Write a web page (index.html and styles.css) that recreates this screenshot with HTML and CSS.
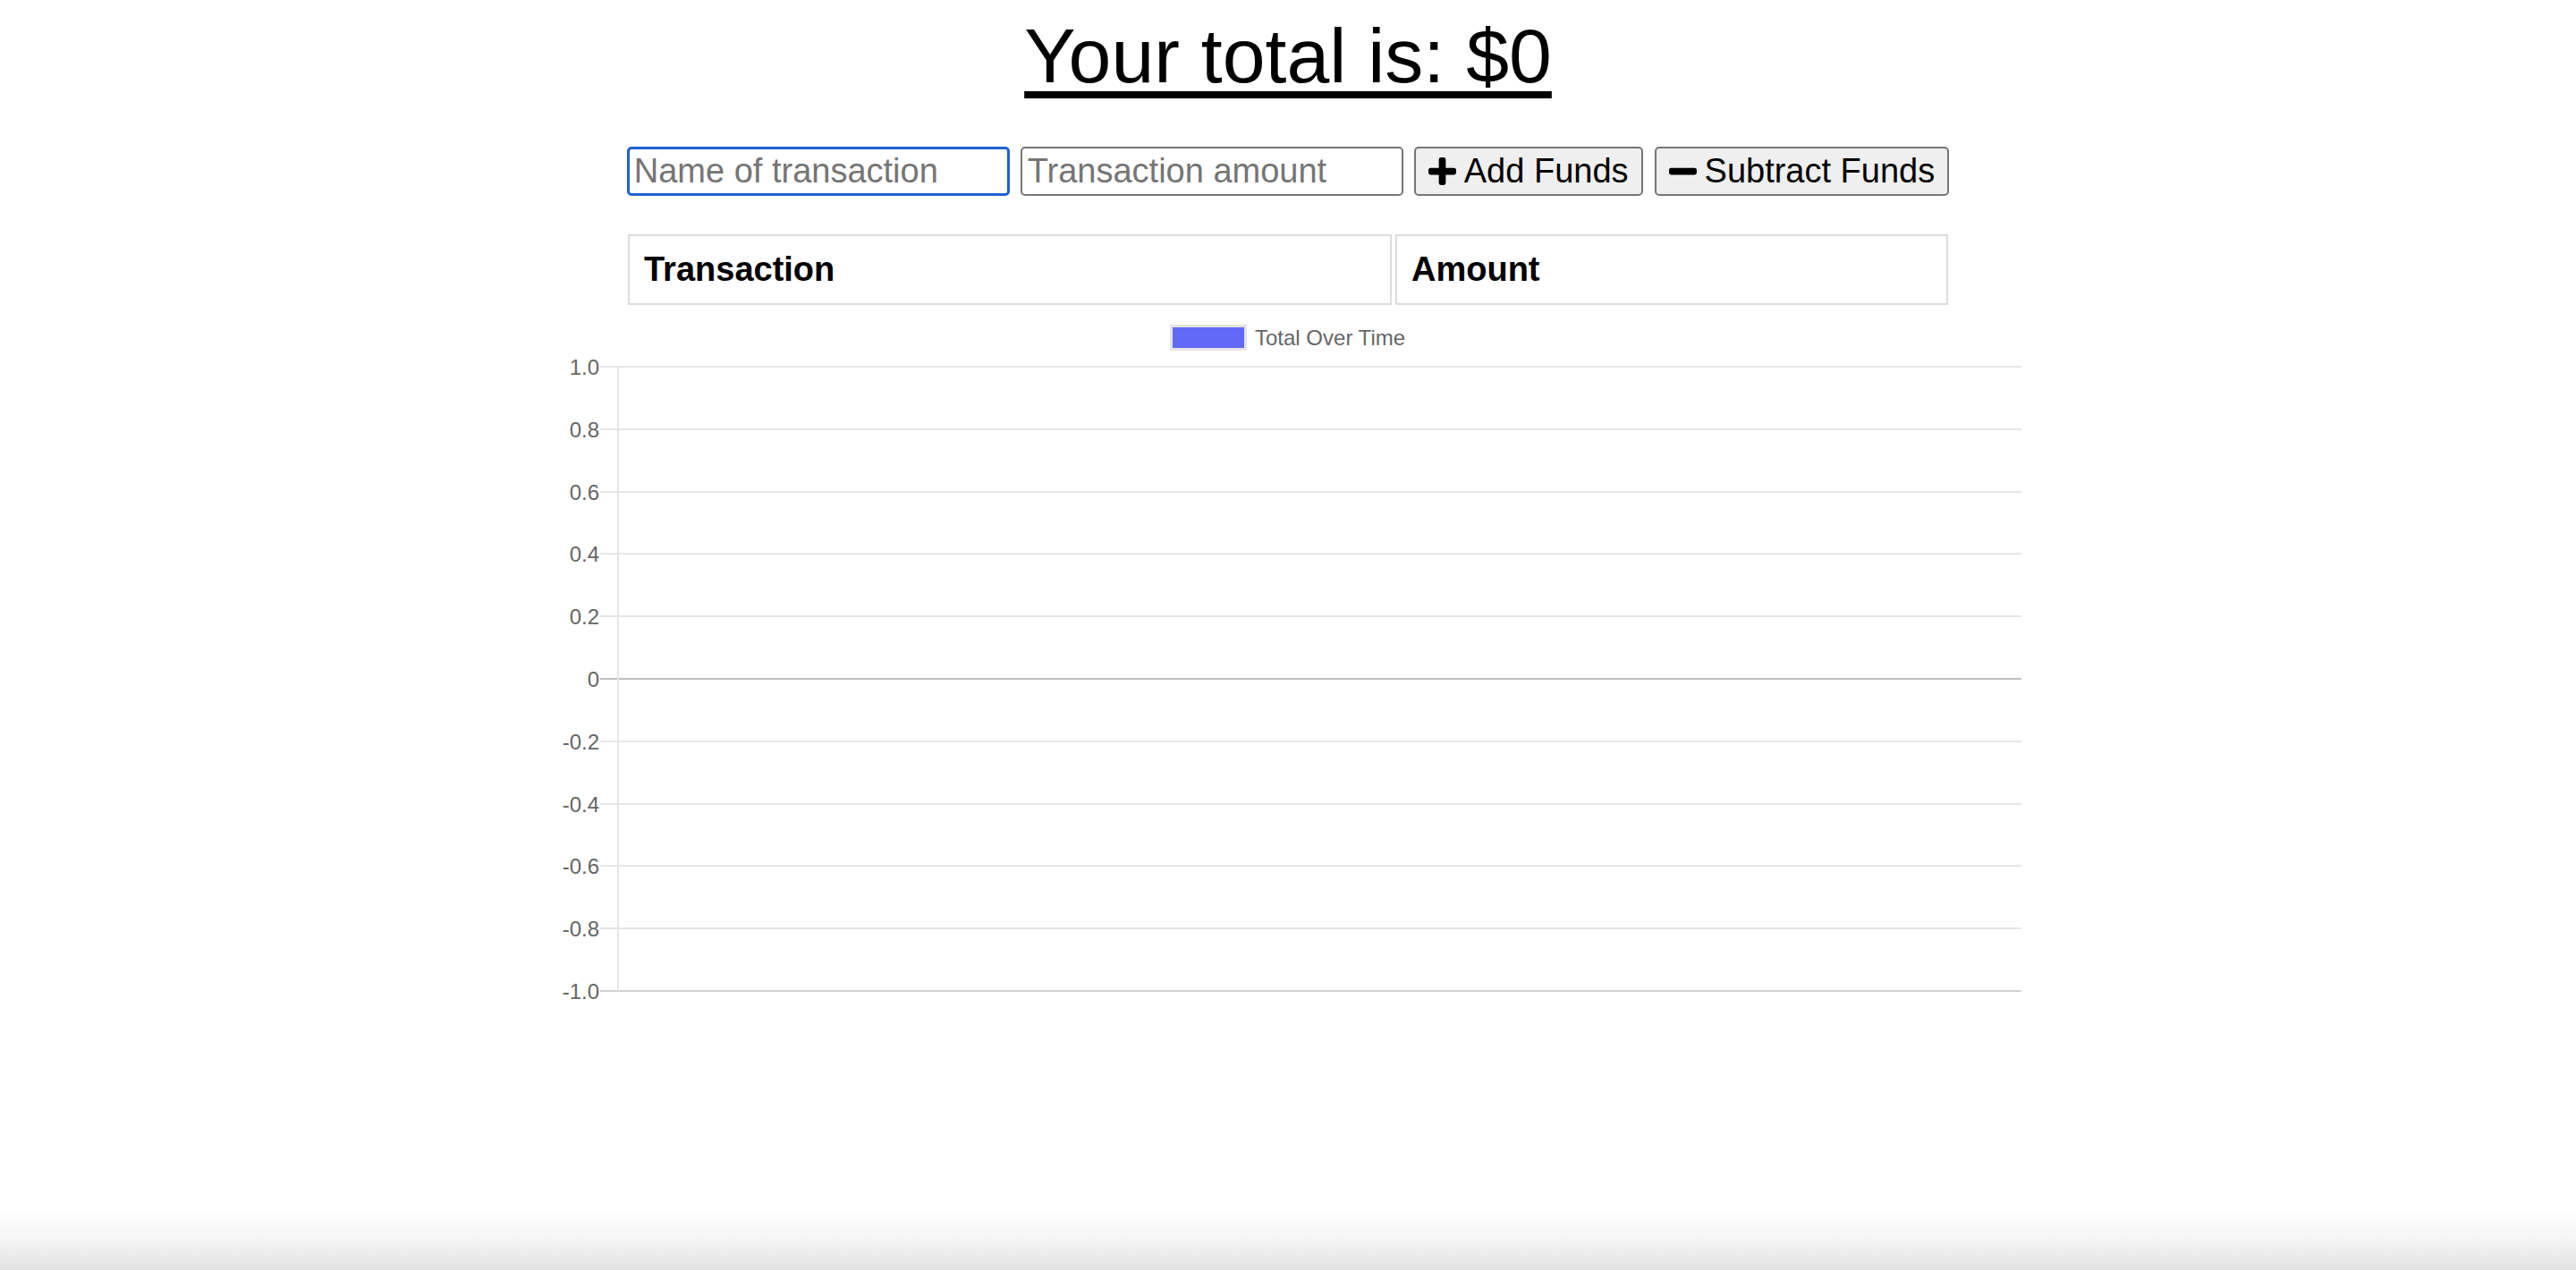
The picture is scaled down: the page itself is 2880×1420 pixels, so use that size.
FILE: index.html
```html
<!DOCTYPE html>
<html>
<head>
  <title>Budget Tracker</title>
  <link rel="stylesheet" href="styles.css">
</head>
<body>
  <h1 class="total">Your total is: $<span id="total">0</span></h1>

  <div class="form">
    <input type="text" id="t-name" class="field field-focus" placeholder="Name of transaction">
    <input type="number" id="t-amount" class="field" placeholder="Transaction amount">
    <button id="add-btn" class="btn">
      <svg class="icon" viewBox="0 0 32 32"><rect x="12" y="0" width="8" height="32" rx="2.5"/><rect x="0" y="12" width="32" height="8" rx="2.5"/></svg>
      Add Funds
    </button>
    <button id="sub-btn" class="btn">
      <svg class="icon" viewBox="0 0 32 32"><rect x="0" y="12" width="32" height="8" rx="2.5"/></svg>
      Subtract Funds
    </button>
  </div>

  <div class="wrapper">
    <table class="transactions">
      <thead>
        <tr>
          <th class="col-name">Transaction</th>
          <th class="col-amount">Amount</th>
        </tr>
      </thead>
      <tbody id="tbody"></tbody>
    </table>
  </div>

  <div class="chart-box">
    <svg id="myChart" class="chart" width="1640" height="800" viewBox="0 0 1640 800">
      <!-- legend -->
      <rect class="legend-box" x="689.5" y="21.5" width="83" height="26"/>
      <text class="legend-label" x="783" y="43">Total Over Time</text>

      <!-- grid -->
      <line class="grid" x1="51" y1="67" x2="1640" y2="67"/>
      <line class="grid" x1="51" y1="137" x2="1640" y2="137"/>
      <line class="grid" x1="51" y1="207" x2="1640" y2="207"/>
      <line class="grid" x1="51" y1="276" x2="1640" y2="276"/>
      <line class="grid" x1="51" y1="346" x2="1640" y2="346"/>
      <line class="grid zero" x1="51" y1="416" x2="1640" y2="416"/>
      <line class="grid" x1="51" y1="486" x2="1640" y2="486"/>
      <line class="grid" x1="51" y1="556" x2="1640" y2="556"/>
      <line class="grid" x1="51" y1="625" x2="1640" y2="625"/>
      <line class="grid" x1="51" y1="695" x2="1640" y2="695"/>
      <line class="grid base" x1="51" y1="765" x2="1640" y2="765"/>
      <line class="grid" x1="71" y1="67" x2="71" y2="765"/>

      <!-- y axis labels -->
      <text class="tick" x="50" y="67">1.0</text>
      <text class="tick" x="50" y="137">0.8</text>
      <text class="tick" x="50" y="207">0.6</text>
      <text class="tick" x="50" y="276">0.4</text>
      <text class="tick" x="50" y="346">0.2</text>
      <text class="tick" x="50" y="416">0</text>
      <text class="tick" x="50" y="486">-0.2</text>
      <text class="tick" x="50" y="556">-0.4</text>
      <text class="tick" x="50" y="625">-0.6</text>
      <text class="tick" x="50" y="695">-0.8</text>
      <text class="tick" x="50" y="765">-1.0</text>
    </svg>
  </div>
</body>
</html>
```

FILE: styles.css
```css
html {
  min-height: 100%;
  background: linear-gradient(to bottom, #fff 1350px, #f5f5f5 1385px, #e2e2e2 1420px);
}

body {
  margin: 0;
  font-family: "Liberation Sans", Arial, sans-serif;
  color: #000;
}

.total {
  margin: 13px 0 0;
  font-size: 86px;
  font-weight: normal;
  text-align: center;
  text-decoration: underline;
  text-decoration-thickness: 8px;
  text-underline-offset: 10px;
  text-decoration-skip-ink: auto;
}

.form {
  display: flex;
  justify-content: center;
  gap: 12px;
  margin-top: 52px;
}

.field {
  box-sizing: border-box;
  width: 428px;
  height: 55px;
  padding: 0 6px;
  font-family: inherit;
  font-size: 38px;
  border: 2px solid #767676;
  border-radius: 5px;
  outline: none;
}

.field::placeholder {
  color: #757575;
}

.field-focus {
  border: 3px solid #1f62cf;
  padding: 0 5px;
}

.btn {
  display: flex;
  align-items: center;
  gap: 9px;
  box-sizing: border-box;
  height: 55px;
  padding: 0 14px;
  font-family: inherit;
  font-size: 38px;
  color: #000;
  background-color: #efefef;
  border: 2px solid #767676;
  border-radius: 5px;
}

.btn .icon {
  width: 31px;
  height: 31px;
  fill: #000;
}

#sub-btn {
  margin-left: 1px;
}

.wrapper {
  margin-top: 43px;
}

.transactions {
  margin: 0 auto;
  border-spacing: 4px 0;
}

.transactions th {
  padding: 16px;
  font-size: 38px;
  line-height: 43px;
  text-align: left;
  border: 2px solid #dddddd;
}

.col-name {
  width: 818px;
}

.col-amount {
  width: 582px;
}

.chart-box {
  width: 1640px;
  margin: 2px auto 0;
}

.chart {
  display: block;
}

.legend-box {
  fill: #6369f6;
  stroke: #e4e4e4;
  stroke-width: 3;
}

.legend-label,
.tick {
  font-family: "Liberation Sans", Arial, sans-serif;
  font-size: 24px;
  fill: #666;
}

.tick {
  text-anchor: end;
  dominant-baseline: central;
}

.grid {
  stroke: #e6e6e6;
  stroke-width: 2;
}

.grid.zero {
  stroke: #bfbfbf;
}

.grid.base {
  stroke: #d0d0d0;
}
```
